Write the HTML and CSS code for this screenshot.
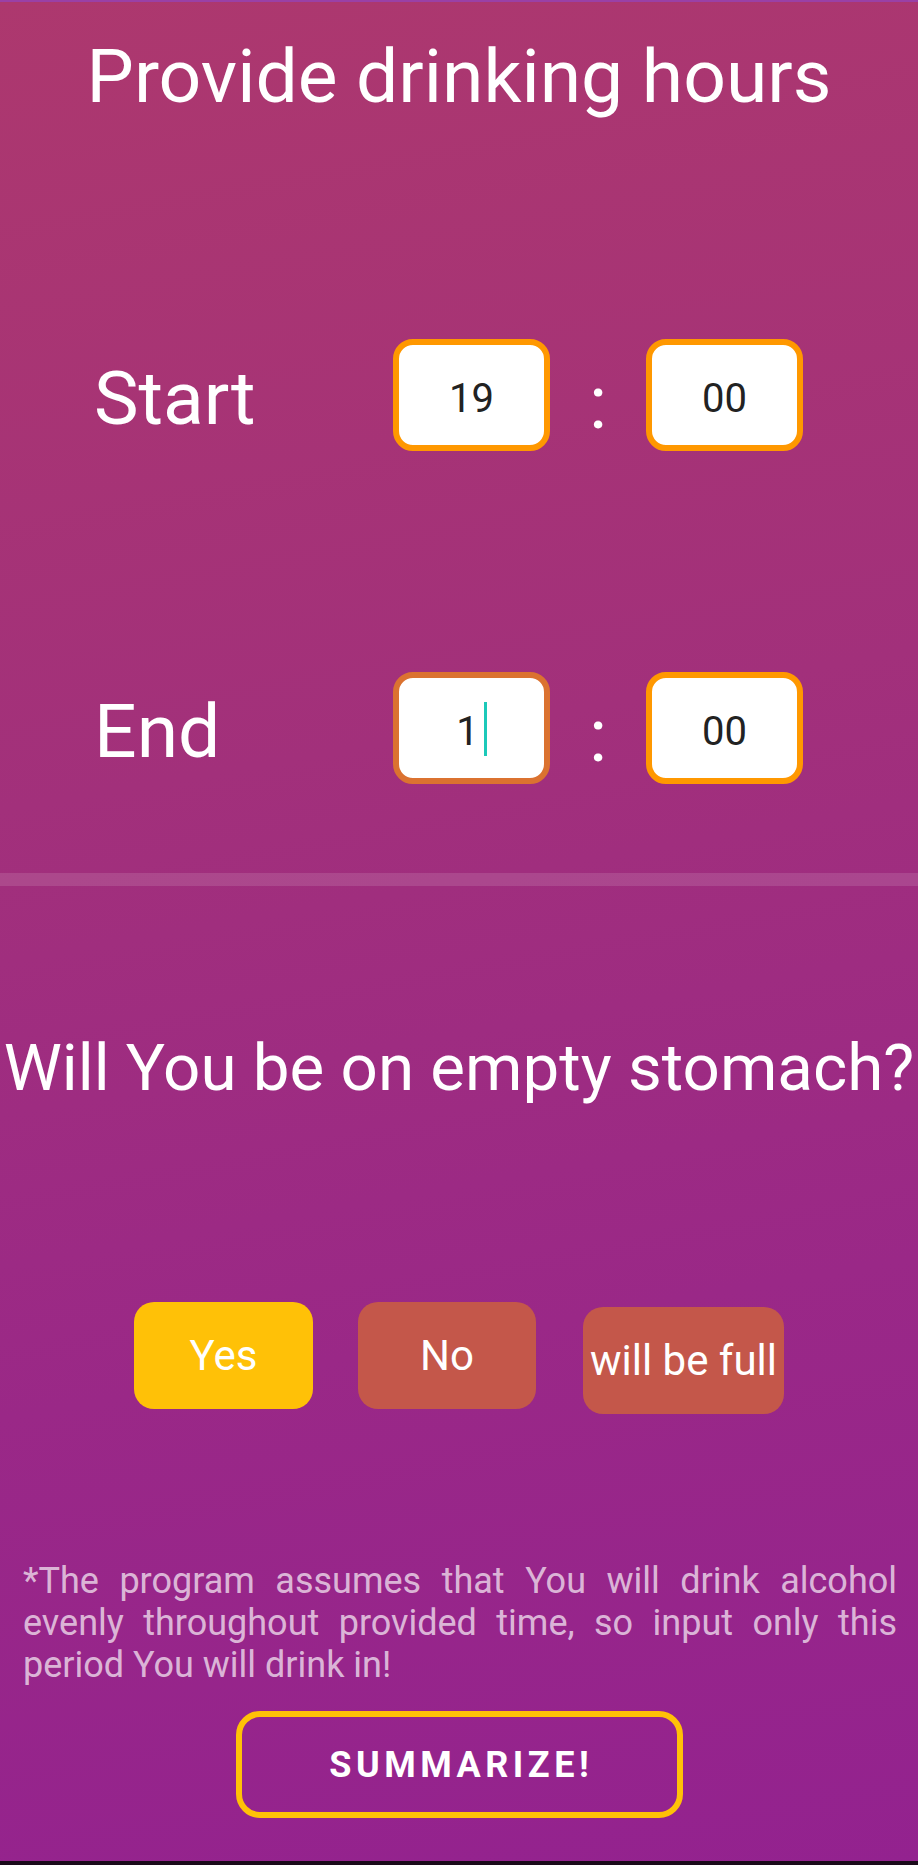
FILE: index.html
```html
<!DOCTYPE html>
<html lang="en">
<head>
<meta charset="utf-8">
<title>Provide drinking hours</title>
<link rel="stylesheet" href="styles.css">
</head>
<body>
<div class="screen">
  <div class="topline"></div>
  <h1 class="title">Provide drinking hours</h1>

  <div class="time-row row-start">
    <div class="label">Start</div>
    <div class="box"><span>19</span></div>
    <div class="colon">:</div>
    <div class="box"><span>00</span></div>
  </div>

  <div class="time-row row-end">
    <div class="label">End</div>
    <div class="box box-focus"><span>1</span><span class="caret"></span></div>
    <div class="colon">:</div>
    <div class="box"><span>00</span></div>
  </div>

  <div class="divider"></div>

  <div class="question-wrap">
    <h2 class="question">Will You be on empty stomach?</h2>
  </div>

  <div class="choices">
    <div class="choice choice-yes">Yes</div>
    <div class="choice choice-no">No</div>
    <div class="choice choice-full">will be full</div>
  </div>

  <p class="note">
    <span class="note-line">*The program assumes that You will drink alcohol</span>
    <span class="note-line">evenly throughout provided time, so input only this</span>
    <span class="note-line note-last">period You will drink in!</span>
  </p>

  <button class="summarize">SUMMARIZE!</button>

  <div class="bottombar"></div>
</div>
</body>
</html>
```

FILE: styles.css
```css
html, body {
  margin: 0;
  padding: 0;
}

body {
  font-family: Roboto, "Noto Sans", "Liberation Sans", sans-serif;
  background: #93228f;
}

.screen {
  width: 918px;
  height: 1865px;
  display: flex;
  flex-direction: column;
  overflow: hidden;
  background: linear-gradient(170deg, #ad386e 0%, #a2307b 40%, #9a2887 70%, #93228f 100%);
  color: #ffffff;
}

.topline {
  height: 2px;
  background: #9a40a6;
  flex: none;
}

.title {
  margin: 29px 0 0;
  font-size: 75px;
  line-height: 90px;
  font-weight: 400;
  text-align: center;
  white-space: nowrap;
}

.time-row {
  display: flex;
  align-items: flex-start;
  padding-left: 94px;
  height: 112px;
  flex: none;
}

.row-start {
  margin-top: 218px;
}

.row-end {
  margin-top: 221px;
}

.label {
  width: 299px;
  font-size: 75px;
  line-height: 88px;
  margin-top: 15px;
}

.box {
  box-sizing: border-box;
  width: 157px;
  height: 112px;
  border: 6px solid #ff9800;
  border-radius: 20px;
  background: #ffffff;
  display: flex;
  align-items: center;
  justify-content: center;
  padding-top: 6px;
  font-size: 40px;
  color: #222222;
}

.box-focus {
  border-color: #db7230;
}

.caret {
  display: inline-block;
  width: 3px;
  height: 54px;
  margin-left: 5px;
  margin-top: -4px;
  background: #1cc9b9;
}

.colon {
  width: 96px;
  text-align: center;
  font-size: 75px;
  line-height: 88px;
  margin-top: 19px;
}

.divider {
  margin-top: 89px;
  height: 13px;
  background: rgba(255, 255, 255, 0.12);
  flex: none;
}

.question-wrap {
  margin-top: 142px;
  display: flex;
  justify-content: center;
}

.question {
  margin: 0;
  font-size: 65.5px;
  line-height: 80px;
  font-weight: 400;
  white-space: nowrap;
}

.choices {
  margin-top: 194px;
  display: flex;
  justify-content: center;
  align-items: flex-start;
  gap: 45px;
  height: 112px;
  flex: none;
}

.choice {
  height: 107px;
  border-radius: 20px;
  display: flex;
  align-items: center;
  justify-content: center;
  font-size: 42px;
  color: #ffffff;
  white-space: nowrap;
}

.choice-yes {
  width: 179px;
  background: #ffc107;
}

.choice-no {
  width: 178px;
  background: #c4574a;
}

.choice-full {
  width: 201px;
  margin-left: 2px;
  margin-top: 5px;
  background: #c4574a;
}

.note {
  margin: 146px 0 0;
  padding: 0 21px 0 23px;
  font-size: 36px;
  line-height: 42px;
  color: rgba(255, 255, 255, 0.68);
}

.note-line {
  display: block;
  text-align: justify;
  text-align-last: justify;
}

.note-line.note-last {
  text-align: left;
  text-align-last: left;
}

.summarize {
  margin: 25px auto 0;
  box-sizing: border-box;
  width: 447px;
  height: 107px;
  border: 6px solid #ffc107;
  border-radius: 24px;
  background: transparent;
  color: #ffffff;
  font-family: Roboto, "Noto Sans", "Liberation Sans", sans-serif;
  font-size: 36px;
  font-weight: 700;
  letter-spacing: 4.5px;
  padding: 0 0 0 4.5px;
  flex: none;
}

.bottombar {
  margin-top: auto;
  height: 4px;
  background: #1a0a1a;
  flex: none;
}
```
